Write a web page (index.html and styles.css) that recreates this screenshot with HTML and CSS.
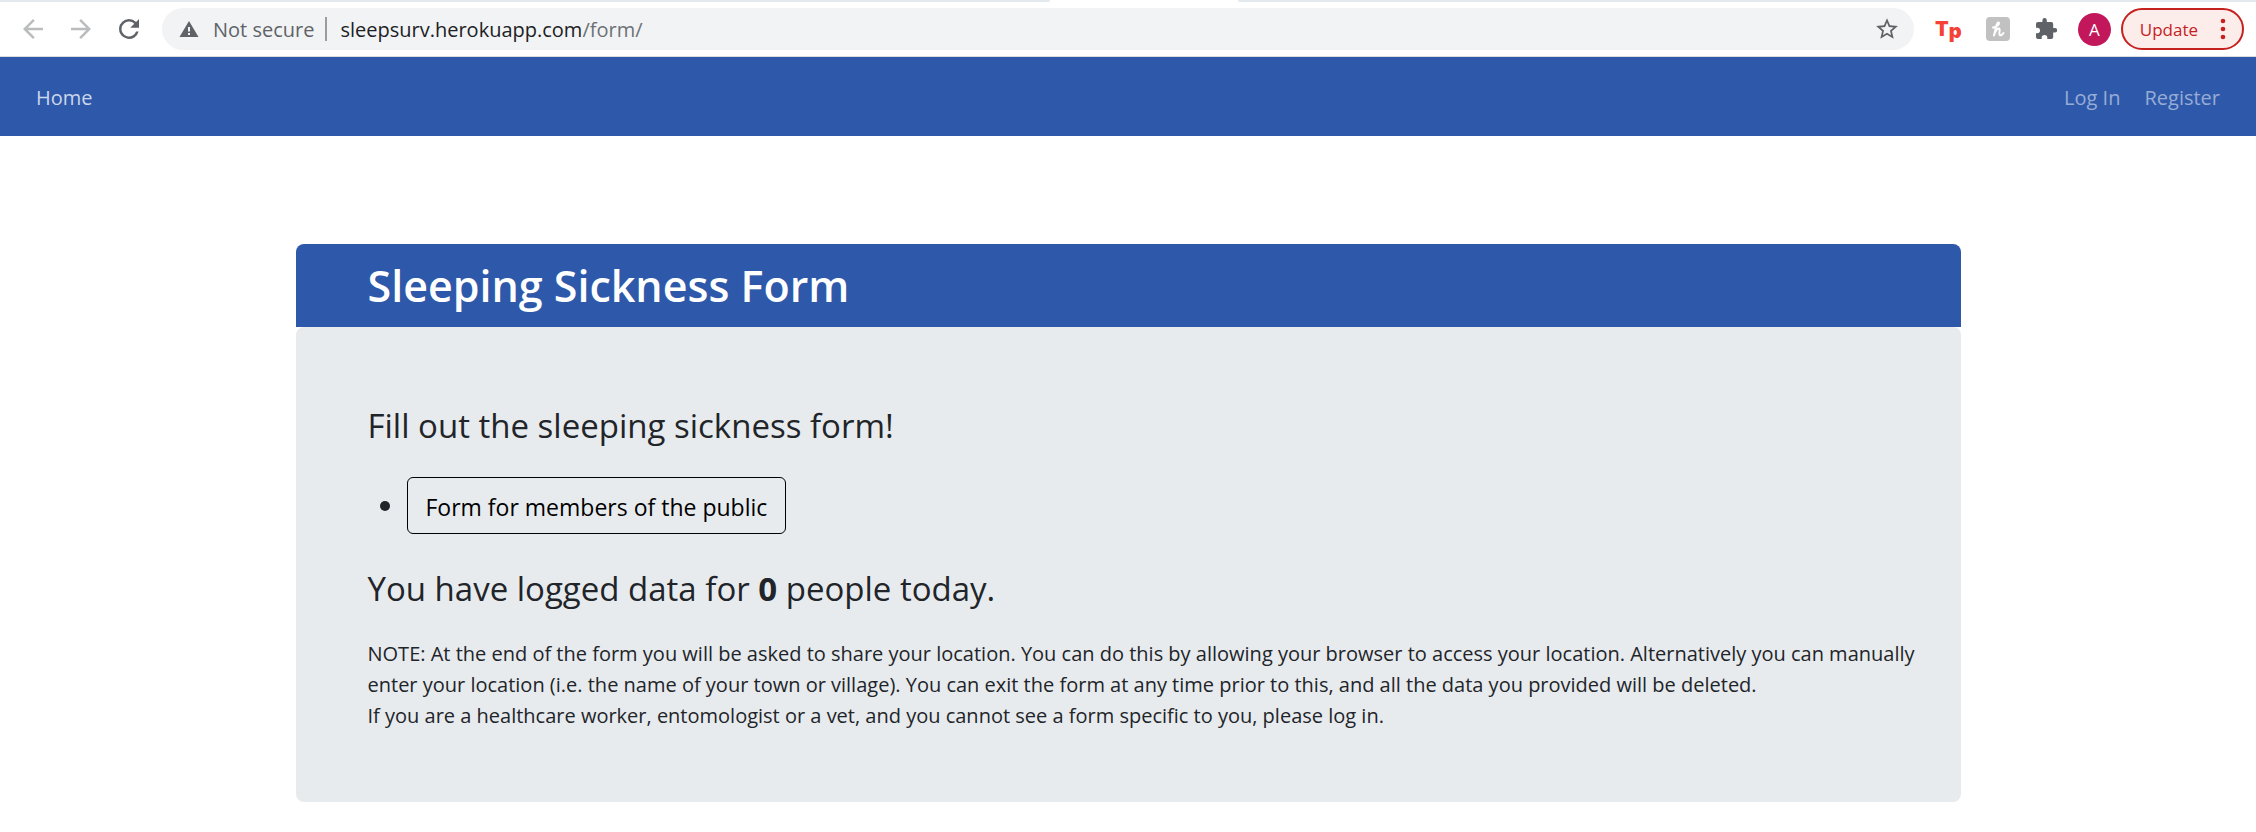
FILE: index.html
```html
<!DOCTYPE html>
<html lang="en">
<head>
<meta charset="utf-8">
<title>Sleeping Sickness Form</title>
<link rel="stylesheet" href="styles.css">
</head>
<body>
<header class="browser">
  <div class="tabstrip"><span class="tab-side tab-side-left"></span><span class="tab-active"></span><span class="tab-side tab-side-right"></span></div>
  <div class="toolbar">
    <div class="history">
      <button class="tool tool-muted" type="button" aria-label="Back"><svg width="30" height="30" viewBox="0 0 24 24"><path d="M20 11H7.83l5.59-5.59L12 4l-8 8 8 8 1.41-1.41L7.83 13H20z"/></svg></button>
      <button class="tool tool-muted" type="button" aria-label="Forward"><svg width="30" height="30" viewBox="0 0 24 24"><path d="M12 4l-1.41 1.41L16.17 11H4v2h12.17l-5.58 5.59L12 20l8-8z"/></svg></button>
      <button class="tool" type="button" aria-label="Reload"><svg width="30" height="30" viewBox="0 0 24 24"><path d="M17.65 6.35A7.96 7.96 0 0 0 12 4a8 8 0 1 0 7.73 10h-2.08A6 6 0 1 1 12 6c1.66 0 3.14.69 4.22 1.78L13 11h7V4z"/></svg></button>
    </div>
    <div class="omnibox">
      <svg class="warning" width="20" height="20" viewBox="0 0 20 20"><path fill-rule="evenodd" d="M10 2 19.500 18H.5zM9 8v4.500h2V8zm0 6v2h2v-2z"/></svg>
      <span class="security">Not secure</span>
      <span class="divider"></span>
      <span class="url">sleepsurv.herokuapp.com<span class="path">/form/</span></span>
      <button class="tool star" type="button" aria-label="Bookmark"><svg width="26" height="26" viewBox="0 0 24 24"><path d="M22 9.240l-7.190-.620L12 2 9.190 8.630 2 9.240l5.460 4.730L5.820 21 12 17.270 18.180 21l-1.630-7.030zM12 15.400l-3.760 2.270 1-4.280-3.320-2.880 4.380-.380L12 6.100l1.710 4.040 4.380.380-3.320 2.880 1 4.280z"/></svg></button>
    </div>
    <div class="extensions">
      <button class="tool brand" type="button">T<span class="brand-low">p</span></button>
      <button class="tool" type="button" aria-label="Coupons"><svg width="24" height="24" viewBox="0 0 24 24"><rect class="tile" width="24" height="24" rx="4"/><path class="script" d="M7 10.500C10.500 10 14.500 6.500 12.500 5.500 10.500 5 9.500 13 8 18.500 9.500 13.500 11.500 11 13 11.500 15 12.500 12 17.500 14 18.300 15.500 18.600 16.500 17.500 17.500 16"/></svg></button>
      <button class="tool puzzle" type="button" aria-label="Extensions"><svg width="24" height="24" viewBox="0 0 24 24"><path d="M21 11h-1.800V7a2 2 0 0 0-2-2h-4.400V3.300a2.200 2.200 0 0 0-4.400 0V5H4a2 2 0 0 0-2 2v3.700h1.200a2.800 2.800 0 0 1 0 5.600H2V20a2 2 0 0 0 2 2h3.700v-1.200a2.800 2.800 0 0 1 5.600 0V22h3.900a2 2 0 0 0 2-2v-4.600H21a2.200 2.200 0 0 0 0-4.400z"/></svg></button>
      <button class="avatar" type="button">A</button>
      <button class="update" type="button">Update<svg width="6" height="22" viewBox="0 0 6 22"><circle cx="3" cy="3" r="2.300"/><circle cx="3" cy="11" r="2.300"/><circle cx="3" cy="19" r="2.300"/></svg></button>
    </div>
  </div>
</header>
<nav class="site-nav">
  <a class="nav-link nav-current" href="#">Home</a>
  <div class="account">
    <a class="nav-link" href="#">Log In</a>
    <a class="nav-link" href="#">Register</a>
  </div>
</nav>
<main class="card">
  <h1 class="card-title">Sleeping Sickness Form</h1>
  <section class="card-body">
    <p class="lead">Fill out the sleeping sickness form!</p>
    <ul class="forms"><li><a class="form-link" href="#">Form for members of the public</a></li></ul>
    <p class="lead">You have logged data for <b>0</b> people today.</p>
    <p class="note">NOTE: At the end of the form you will be asked to share your location. You can do this by allowing your browser to access your location. Alternatively you can manually enter your location (i.e. the name of your town or village). You can exit the form at any time prior to this, and all the data you provided will be deleted.<br>If you are a healthcare worker, entomologist or a vet, and you cannot see a form specific to you, please log in.</p>
  </section>
</main>
</body>
</html>
```
FILE: styles.css
```css
* { box-sizing: border-box; }
body {
  margin: 0;
  background: #fff;
  color: #212529;
  font-family: "Open Sans", "Noto Sans", sans-serif;
  font-size: 20px;
}
button { border: 0; padding: 0; background: none; font: inherit; }
svg { display: block; fill: #5f6368; }

.tabstrip { display: flex; height: 2px; }
.tab-side { background: #e4e9ed; }
.tab-side-left { flex: 0 0 1050px; border-bottom-right-radius: 2px; }
.tab-active { flex: 0 0 188px; }
.tab-side-right { flex: 1; border-bottom-left-radius: 2px; }
.toolbar {
  display: flex;
  align-items: center;
  height: 55px;
  padding: 0 12px 0 18px;
  border-bottom: 1px solid #dcdcdc;
}
.history { display: flex; gap: 18px; margin-right: 18px; }
.tool-muted svg { fill: #babcbe; }
.omnibox {
  display: flex;
  flex: 1;
  align-items: center;
  height: 42px;
  padding: 0 14px 0 17px;
  border-radius: 21px;
  background: #f1f3f4;
}
.security { margin-left: 14px; color: #5f6368; }
.divider { width: 2px; height: 24px; margin: 0 13px 0 11px; background: #9a9da0; }
.url { flex: 1; color: #202124; }
.path { color: #6d7175; }
.extensions { display: flex; align-items: center; margin-left: 21px; }
.extensions .tool { margin-right: 24px; }
.extensions .puzzle { margin-right: 20px; }
.extensions .brand {
  display: flex;
  align-items: center;
  color: #f44336;
  font-family: "Inter", "Open Sans", sans-serif;
  font-size: 20px;
  font-weight: 900;
  line-height: 24px;
}
.brand-low { padding-top: 4px; }
.tile { fill: #c1c1c1; }
.script { fill: none; stroke: #fff; stroke-width: 2; stroke-linecap: round; stroke-linejoin: round; }
.avatar {
  width: 33px;
  height: 33px;
  margin-right: 10px;
  border-radius: 50%;
  background: #c2185b;
  color: #fff;
  font-size: 17px;
}
.update {
  display: flex;
  align-items: center;
  gap: 22px;
  height: 42px;
  padding: 0 16px 0 17px;
  border: 2px solid #c5221f;
  border-radius: 21px;
  background: #fcecea;
  color: #c5221f;
  font-size: 17px;
}
.update svg { fill: #c5221f; }

.site-nav {
  display: flex;
  align-items: center;
  justify-content: space-between;
  height: 79px;
  padding: 2px 36px 0;
  background: #2e59aa;
}
.account { display: flex; gap: 24px; }
.nav-link { color: #97acd5; text-decoration: none; }
.nav-current { color: #cbd6ea; }

.card { max-width: 1665px; margin: 108px auto 30px; }
.card-title {
  margin: 0;
  padding: 12px 72px 11px;
  border-radius: 8px 8px 0 0;
  background: #2e59aa;
  color: #fff;
  font-size: 43px;
  font-weight: 600;
  line-height: 60px;
}
.card-body { padding: 72px 36px 71px 72px; border-radius: 8px; background: #e8ebee; }
.lead { margin: 0; font-size: 33px; line-height: 54px; }
.forms { margin: 24px 0 28px; padding-left: 39px; font-size: 23px; }
.forms li::marker { font-size: 28px; }
.form-link {
  display: inline-block;
  padding: 12px 18px 9px;
  border: 1px solid #000;
  border-radius: 6px;
  color: #000;
  line-height: 34px;
  text-decoration: none;
}
.note { margin: 22px 0 0; font-size: 20px; line-height: 31px; }
```
